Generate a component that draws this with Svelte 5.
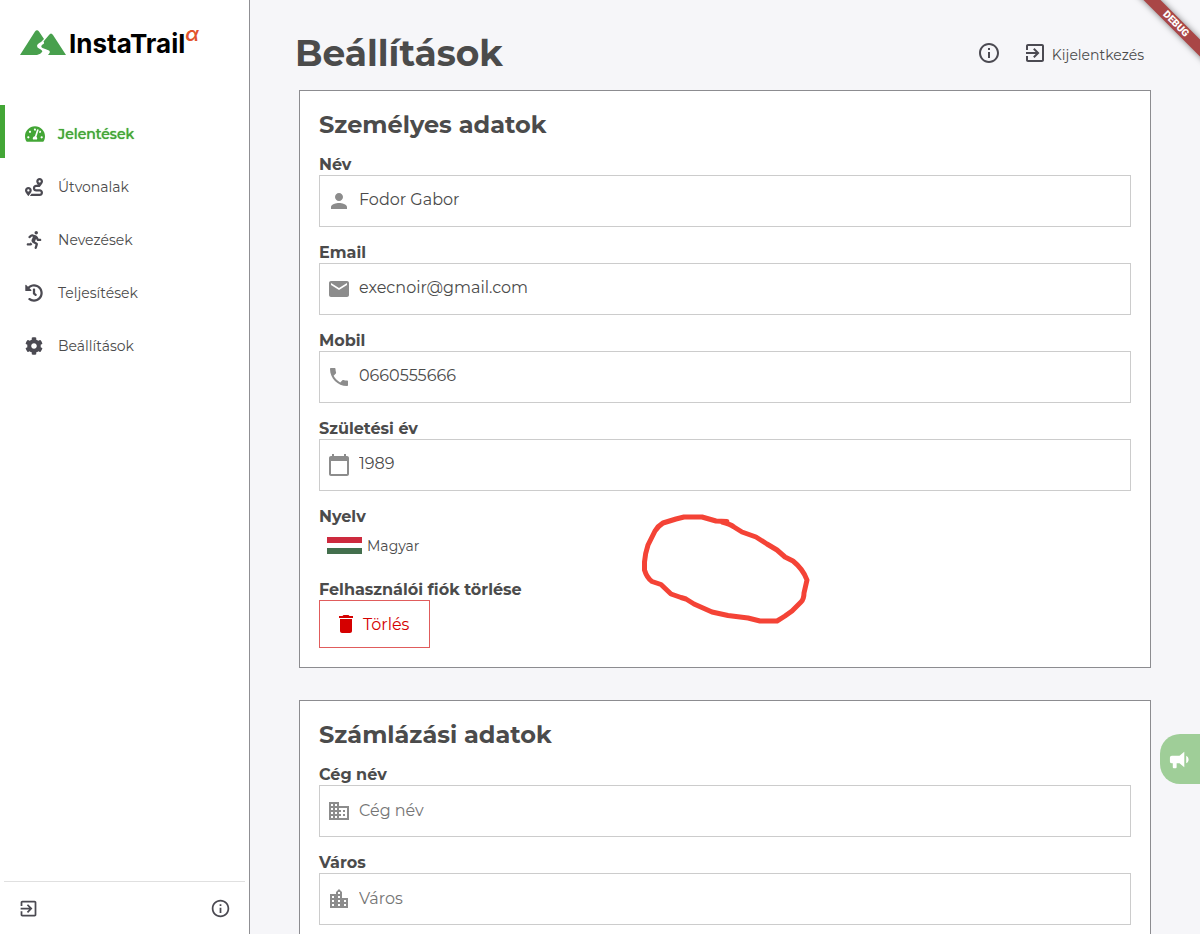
<script>
  const icons = {
    gauge: { box: '0 0 576 512', d: 'M288 32C128.94 32 0 160.94 0 320c0 52.8 14.25 102.26 39.06 144.8 5.61 9.62 16.3 15.2 27.44 15.2h443c11.14 0 21.83-5.58 27.44-15.2C561.75 422.26 576 372.8 576 320c0-159.06-128.94-288-288-288zm0 64c14.71 0 26.58 10.13 30.32 23.65-1.11 2.26-2.64 4.23-3.45 6.67l-9.22 27.67c-5.13 3.49-10.97 6.01-17.64 6.01-17.67 0-32-14.33-32-32S270.33 96 288 96zM96 384c-17.67 0-32-14.33-32-32s14.33-32 32-32 32 14.33 32 32-14.33 32-32 32zm48-160c-17.67 0-32-14.33-32-32s14.33-32 32-32 32 14.33 32 32-14.33 32-32 32zm246.77-72.41l-61.33 184C343.13 347.33 352 364.54 352 384c0 11.72-3.38 22.55-8.88 32H232.88c-5.5-9.45-8.88-20.28-8.88-32 0-33.94 26.5-61.43 59.9-63.59l61.34-184.01c4.17-12.56 17.73-19.45 30.36-15.17 12.57 4.19 19.35 17.79 15.17 30.36zm14.66 57.2l15.52-46.55c3.47-1.29 7.13-2.23 11.05-2.23 17.67 0 32 14.33 32 32s-14.33 32-32 32c-11.38-.01-20.89-6.28-26.57-15.22zM480 384c-17.67 0-32-14.33-32-32s14.33-32 32-32 32 14.33 32 32-14.33 32-32 32z' },
    route: { box: '0 0 512 512', d: 'M416 320h-96c-17.6 0-32-14.4-32-32s14.4-32 32-32h96s96-107 96-160-43-96-96-96-96 43-96 96c0 25.5 22.2 63.4 45.3 96H320c-52.9 0-96 43.1-96 96s43.1 96 96 96h96c17.6 0 32 14.4 32 32s-14.4 32-32 32H185.5c-16 24.8-33.8 47.7-47.3 64H416c52.9 0 96-43.1 96-96s-43.1-96-96-96zm0-256c17.7 0 32 14.3 32 32s-14.3 32-32 32-32-14.3-32-32 14.3-32 32-32zM96 256c-53 0-96 43-96 96s96 160 96 160 96-107 96-160-43-96-96-96zm0 128c-17.7 0-32-14.3-32-32s14.3-32 32-32 32 14.3 32 32-14.3 32-32 32z' },
    running: { box: '-48 0 512 512', d: 'M272 96c26.51 0 48-21.49 48-48S298.51 0 272 0s-48 21.49-48 48 21.49 48 48 48zM113.69 317.47l-14.8 34.52H32c-17.67 0-32 14.33-32 32s14.33 32 32 32h77.45c19.25 0 36.58-11.44 44.11-29.09l8.79-20.52-10.67-6.3c-17.32-10.23-30.06-25.37-37.99-42.61zM384 223.99h-44.03l-26.06-53.25c-12.5-25.55-35.45-44.23-61.78-50.94l-71.08-21.14c-28.3-6.8-57.77-.55-80.84 17.14l-39.67 30.41c-14.03 10.75-16.69 30.83-5.92 44.86s30.84 16.66 44.86 5.92l39.69-30.41c7.67-5.89 17.44-8 25.27-6.14l14.7 4.37-37.46 87.39c-12.62 29.48-1.31 64.01 26.3 80.31l84.98 50.17-27.47 87.73c-5.28 16.86 4.11 34.81 20.97 40.09 3.19 1 6.41 1.48 9.58 1.48 13.61 0 26.23-8.77 30.52-22.45l31.64-101.06c5.91-20.77-2.89-43.08-21.64-54.39l-61.24-36.14 31.31-78.28 20.27 41.43c8 16.34 24.92 26.89 43.11 26.89H384c17.67 0 32-14.33 32-32s-14.33-31.99-32-31.99z' },
    history: { box: '0 0 512 512', d: 'M504 255.531c.253 136.64-111.18 248.372-247.82 248.468-59.015.042-113.223-20.53-155.822-54.911-11.077-8.94-11.905-25.541-1.839-35.607l11.267-11.267c8.609-8.609 22.353-9.551 31.891-1.984C173.062 425.135 212.781 440 256 440c101.705 0 184-82.311 184-184 0-101.705-82.311-184-184-184-48.814 0-93.149 18.969-126.068 49.932l50.754 50.754c10.08 10.08 2.941 27.314-11.313 27.314H24c-8.837 0-16-7.163-16-16V38.627c0-14.254 17.234-21.393 27.314-11.314l49.372 49.372C129.209 34.136 189.552 8 256 8c136.81 0 247.747 110.78 248 247.531zm-180.912 78.784l9.823-12.63c8.138-10.463 6.253-25.542-4.21-33.679L288 256.349V152c0-13.255-10.745-24-24-24h-16c-13.255 0-24 10.745-24 24v135.651l65.409 50.874c10.463 8.137 25.541 6.253 33.679-4.21z' },
    cog: { box: '0 0 512 512', d: 'M487.4 315.7l-42.6-24.6c4.3-23.2 4.3-47 0-70.2l42.6-24.6c4.9-2.8 7.1-8.6 5.5-14-11.1-35.6-30-67.8-54.7-94.6-3.8-4.1-10-5.1-14.8-2.3L380.8 110c-17.9-15.4-38.5-27.3-60.8-35.1V25.8c0-5.6-3.9-10.5-9.4-11.7-36.7-8.2-74.3-7.8-109.2 0-5.5 1.2-9.4 6.1-9.4 11.7V75c-22.2 7.9-42.8 19.8-60.8 35.1L88.7 85.5c-4.9-2.8-11-1.9-14.8 2.3-24.7 26.7-43.6 58.9-54.7 94.6-1.7 5.4.6 11.2 5.5 14L67.3 221c-4.3 23.2-4.3 47 0 70.2l-42.6 24.6c-4.9 2.8-7.1 8.6-5.5 14 11.1 35.6 30 67.8 54.7 94.6 3.8 4.1 10 5.1 14.8 2.3l42.6-24.6c17.9 15.4 38.5 27.3 60.8 35.1v49.2c0 5.6 3.9 10.5 9.4 11.7 36.7 8.2 74.3 7.8 109.2 0 5.5-1.2 9.4-6.1 9.4-11.7v-49.2c22.2-7.9 42.8-19.8 60.8-35.1l42.6 24.6c4.9 2.8 11 1.9 14.8-2.3 24.7-26.7 43.6-58.9 54.7-94.6 1.5-5.5-.7-11.3-5.6-14.1zM256 336c-44.1 0-80-35.9-80-80s35.9-80 80-80 80 35.9 80 80-35.9 80-80 80z' },
    exit: { box: '0 0 24 24', d: 'M10.09 15.59L11.5 17l5-5-5-5-1.41 1.41L12.67 11H3v2h9.67l-2.58 2.59zM19 3H5c-1.11 0-2 .9-2 2v4h2V5h14v14H5v-4H3v4c0 1.1.89 2 2 2h14c1.1 0 2-.9 2-2V5c0-1.1-.9-2-2-2z' },
    info: { box: '0 0 24 24', d: 'M11 7h2v2h-2zm0 4h2v6h-2zm1-9C6.48 2 2 6.48 2 12s4.48 10 10 10 10-4.48 10-10S17.52 2 12 2zm0 18c-4.41 0-8-3.59-8-8s3.59-8 8-8 8 3.59 8 8-3.59 8-8 8z' },
    person: { box: '0 0 24 24', d: 'M12 12c2.21 0 4-1.79 4-4s-1.79-4-4-4-4 1.79-4 4 1.79 4 4 4zm0 2c-2.67 0-8 1.34-8 4v2h16v-2c0-2.66-5.33-4-8-4z' },
    mail: { box: '0 0 24 24', d: 'M20 4H4c-1.1 0-1.99.9-1.99 2L2 18c0 1.1.9 2 2 2h16c1.1 0 2-.9 2-2V6c0-1.1-.9-2-2-2zm0 4l-8 5-8-5V6l8 5 8-5v2z' },
    phone: { box: '0 0 24 24', d: 'M6.62 10.79c1.44 2.83 3.76 5.14 6.59 6.59l2.2-2.2c.27-.27.67-.36 1.02-.24 1.12.37 2.33.57 3.57.57.55 0 1 .45 1 1V20c0 .55-.45 1-1 1-9.39 0-17-7.61-17-17 0-.55.45-1 1-1h3.5c.55 0 1 .45 1 1 0 1.25.2 2.45.57 3.57.11.35.03.74-.25 1.02l-2.2 2.2z' },
    calendar: { box: '0 0 24 24', d: 'M20 3h-1V1h-2v2H7V1H5v2H4c-1.1 0-2 .9-2 2v16c0 1.1.9 2 2 2h16c1.1 0 2-.9 2-2V5c0-1.1-.9-2-2-2zm0 18H4V8h16v13z' },
    trash: { box: '0 0 24 24', d: 'M6 19c0 1.1.9 2 2 2h8c1.1 0 2-.9 2-2V7H6v12zM19 4h-3.5l-1-1h-5l-1 1H5v2h14V4z' },
    business: { box: '0 0 24 24', d: 'M12 7V3H2v18h20V7H12zM6 19H4v-2h2v2zm0-4H4v-2h2v2zm0-4H4V9h2v2zm0-4H4V5h2v2zm4 12H8v-2h2v2zm0-4H8v-2h2v2zm0-4H8V9h2v2zm0-4H8V5h2v2zm10 12h-8v-2h2v-2h-2v-2h2v-2h-2V9h8v10zm-2-8h-2v2h2v-2zm0 4h-2v2h2v-2z' },
    city: { box: '0 0 24 24', d: 'M15 11V5l-3-3-3 3v2H3v14h18V11h-6zm-8 8H5v-2h2v2zm0-4H5v-2h2v2zm0-4H5V9h2v2zm6 8h-2v-2h2v2zm0-4h-2v-2h2v2zm0-4h-2V9h2v2zm0-4h-2V5h2v2zm6 12h-2v-2h2v2zm0-4h-2v-2h2v2z' },
    horn: { box: '0 0 24 24', d: 'M12 8H4a2 2 0 0 0-2 2v4a2 2 0 0 0 2 2h1v4a1 1 0 0 0 1 1h2a1 1 0 0 0 1-1v-4h3l5 4V4l-5 4m9.500 4c0 1.710-.960 3.260-2.500 4V8c1.530.750 2.500 2.300 2.500 4z' }
  };

  const nav = [
    { label: 'Jelentések', icon: 'gauge', active: true },
    { label: 'Útvonalak', icon: 'route' },
    { label: 'Nevezések', icon: 'running' },
    { label: 'Teljesítések', icon: 'history' },
    { label: 'Beállítások', icon: 'cog' }
  ];

  const personal = [
    { id: 'name', label: 'Név', icon: 'person', type: 'text', value: 'Fodor Gabor' },
    { id: 'email', label: 'Email', icon: 'mail', type: 'email', value: 'execnoir@gmail.com' },
    { id: 'mobile', label: 'Mobil', icon: 'phone', type: 'tel', value: '0660555666' },
    { id: 'birth', label: 'Születési év', icon: 'calendar', type: 'text', value: '1989' }
  ];

  const billing = [
    { id: 'company', label: 'Cég név', icon: 'business', type: 'text', value: '' },
    { id: 'city', label: 'Város', icon: 'city', type: 'text', value: '' }
  ];
</script>

{#snippet icon(name)}
  <svg class="icon {name}" viewBox={icons[name].box} aria-hidden="true"><path d={icons[name].d} /></svg>
{/snippet}

{#snippet field(f)}
  <div class="field">
    <label for={f.id}>{f.label}</label>
    <div class="box">
      {@render icon(f.icon)}
      <input id={f.id} class:filled={f.value} type={f.type} value={f.value} placeholder={f.label} />
    </div>
  </div>
{/snippet}

<div class="app">
  <aside>
    <a class="logo" href="#home">
      <svg class="peaks" viewBox="0 0 46 25" aria-hidden="true">
        <path d="M0 25 L15 1.500 Q17 -1 19 1.500 L24 9 L21 12 Q17 14 17 16 Q17 18 20 19 Q23 20.500 22 22 Q21 24 17 25Z" />
        <path d="M23.500 11.500 L29 5 Q31 2 33 5 L46 25 H28 Q31 22 29 20.500 Q26 19 22.500 18 Q20 16.500 22.500 14.500 Q25 13.500 23.500 11.500Z" />
      </svg>
      <span class="brand">InstaTrail</span>
      <span class="alpha">α</span>
    </a>
    <nav>
      {#each nav as item}
        <a href="#{item.icon}" class:active={item.active}>
          {@render icon(item.icon)}
          <span>{item.label}</span>
        </a>
      {/each}
    </nav>
    <footer>
      <button aria-label="Kijelentkezés">{@render icon('exit')}</button>
      <button aria-label="Információ">{@render icon('info')}</button>
    </footer>
  </aside>

  <main>
    <header>
      <h1>Beállítások</h1>
      <div class="actions">
        <button aria-label="Információ">{@render icon('info')}</button>
        <button>{@render icon('exit')}<span>Kijelentkezés</span></button>
      </div>
    </header>

    <section>
      <h2>Személyes adatok</h2>
      {#each personal as f}{@render field(f)}{/each}
      <div class="field">
        <span class="title">Nyelv</span>
        <button class="language">
          <span class="flag"></span>
          Magyar
        </button>
      </div>
      <div class="field">
        <span class="title">Felhasználói fiók törlése</span>
        <button class="delete">{@render icon('trash')}Törlés</button>
      </div>
      <svg class="scribble" viewBox="0 0 200 140" aria-hidden="true">
        <path d="M97 21.500 L86 21 L72 17 L54 17 L46 19 L33 23 Q28 26 25 31 L18 45 Q15 54 14.500 62 V70 Q17 78 22 81.500 L31 84.500 L41 94 L51 97.500 L56 99 L64 104 L82 112 L98 115.500 L118 118 L130 121 H147 Q152 118 155 116 L162 111 L171 102 Q174 99 174 93 L177 80 Q173 69 163 61 L155 57 L147 50 L137 44 L126 37 L112 32 L104 27 Q100 24 92 22" />
      </svg>
    </section>

    <section>
      <h2>Számlázási adatok</h2>
      {#each billing as f}{@render field(f)}{/each}
    </section>
  </main>

  <button class="feedback" aria-label="Visszajelzés">{@render icon('horn')}</button>
  <div class="ribbon"><div class="band">DEBUG</div></div>
</div>

<style>
  :global(body) {
    margin: 0;
  }

  .app {
    --ink: #4b4b4b;
    --icon: #4b4a52;
    --green: #43a636;
    position: relative;
    display: flex;
    height: 100vh;
    overflow: hidden;
    background: #f6f6f9;
    color: var(--ink);
    font-family: Montserrat, Inter, sans-serif;
    font-size: 16px;
  }

  .app * {
    box-sizing: border-box;
  }

  button {
    display: flex;
    align-items: center;
    padding: 0;
    border: 0;
    background: none;
    color: inherit;
    font: inherit;
    cursor: pointer;
  }

  .icon {
    flex: none;
    width: 24px;
    height: 24px;
    fill: currentColor;
  }

  aside {
    display: flex;
    flex: none;
    flex-direction: column;
    width: 250px;
    border-right: 1px solid #8f8f93;
    background: #fff;
  }

  .logo {
    display: flex;
    align-items: flex-start;
    padding: 30px 20px 47px;
    text-decoration: none;
  }

  .peaks {
    width: 46px;
    height: 25px;
    margin-right: 3px;
    fill: #48a04d;
  }

  .brand {
    color: #000;
    font-family: Inter, sans-serif;
    font-size: 26px;
    font-weight: 700;
    line-height: 28px;
  }

  .alpha {
    color: #e2532d;
    font-family: Inter, sans-serif;
    font-size: 20px;
    font-style: italic;
    font-weight: 600;
    line-height: 8px;
  }

  nav {
    flex: 1;
  }

  nav a {
    display: flex;
    align-items: center;
    gap: 14px;
    height: 53px;
    padding: 4px 0 0 24px;
    color: var(--ink);
    font-size: 14px;
    text-decoration: none;
  }

  nav a.active {
    gap: 13px;
    padding-left: 20px;
    border-left: 5px solid var(--green);
    color: var(--green);
    font-weight: 500;
    text-shadow: 0 0 1px currentColor;
  }

  nav .icon {
    width: 20px;
    height: 18px;
    color: var(--icon);
  }

  nav .active .icon {
    color: var(--green);
  }

  footer {
    display: flex;
    align-items: center;
    justify-content: space-between;
    height: 53px;
    margin: 0 4px;
    padding: 0 14px;
    border-top: 1px solid #e0e0e0;
    color: var(--icon);
  }

  footer .icon {
    width: 21px;
    height: 21px;
  }

  main {
    flex: 1;
    min-width: 0;
    padding: 0 49px;
    overflow-y: auto;
    scrollbar-width: none;
  }

  header {
    display: flex;
    align-items: center;
    justify-content: space-between;
    height: 90px;
    padding: 0 7px 0 0;
  }

  h1 {
    margin: 0 0 0 -4px;
    padding-top: 16px;
    font-size: 36px;
    font-weight: 700;
    line-height: 58px;
  }

  .actions {
    display: flex;
    gap: 22px;
    padding-top: 16px;
    font-size: 14px;
  }

  .actions button {
    gap: 5px;
  }

  .actions span {
    padding-top: 3px;
  }

  .actions .icon {
    color: var(--icon);
  }

  section {
    position: relative;
    margin-bottom: 32px;
    padding: 18px 19px 19px;
    border: 1px solid #8c8c90;
    background: #fff;
  }

  h2 {
    margin: 0 0 12px;
    font-size: 24px;
    font-weight: 700;
    line-height: 32px;
  }

  .field + .field {
    margin-top: 14px;
  }

  label,
  .title {
    display: block;
    padding-top: 2px;
    font-weight: 700;
    line-height: 20px;
  }

  .box {
    display: flex;
    align-items: center;
    gap: 8px;
    height: 52px;
    padding: 0 8px 0 7px;
    border: 1px solid #ccc;
  }

  .box .icon {
    color: #8c8c8c;
  }

  input {
    flex: 1;
    min-width: 0;
    height: 100%;
    padding: 0 0 1px;
    border: 0;
    outline: 0;
    background: none;
    color: var(--ink);
    font: inherit;
  }

  input.filled {
    padding-bottom: 3px;
  }

  input::placeholder {
    color: #757575;
    opacity: 1;
  }

  .language {
    gap: 5px;
    height: 37px;
    padding: 0 8px;
    font-size: 14px;
  }

  .flag {
    width: 35px;
    height: 17px;
    background: linear-gradient(#cd2a3e 0 35%, #fff 35% 66%, #436f4d 66%);
  }

  .delete {
    gap: 5px;
    height: 48px;
    padding: 0 20px 0 14px;
    border: 1px solid #e05c5c;
    color: #d50000;
  }

  .scribble {
    position: absolute;
    top: 409px;
    left: 330px;
    width: 200px;
    height: 140px;
    fill: none;
    stroke: #f44336;
    stroke-width: 5;
    stroke-linecap: round;
    stroke-linejoin: round;
    pointer-events: none;
  }

  .feedback {
    position: absolute;
    right: 0;
    bottom: 150px;
    width: 40px;
    height: 50px;
    padding-left: 8px;
    border-radius: 20px 0 0 20px;
    background: #9fce98;
    color: #fff;
  }

  .feedback .icon {
    width: 23px;
    height: 23px;
  }

  .ribbon {
    position: absolute;
    top: 0;
    right: 0;
    width: 80px;
    height: 80px;
    overflow: hidden;
    pointer-events: none;
  }

  .band {
    position: absolute;
    top: 18px;
    right: -26px;
    width: 100px;
    background: #a94646;
    box-shadow: 0 0 6px rgba(0, 0, 0, 0.5);
    color: #fff;
    font-family: Roboto, sans-serif;
    font-size: 10px;
    font-weight: 900;
    line-height: 12px;
    text-align: center;
    transform: rotate(45deg);
  }
</style>
